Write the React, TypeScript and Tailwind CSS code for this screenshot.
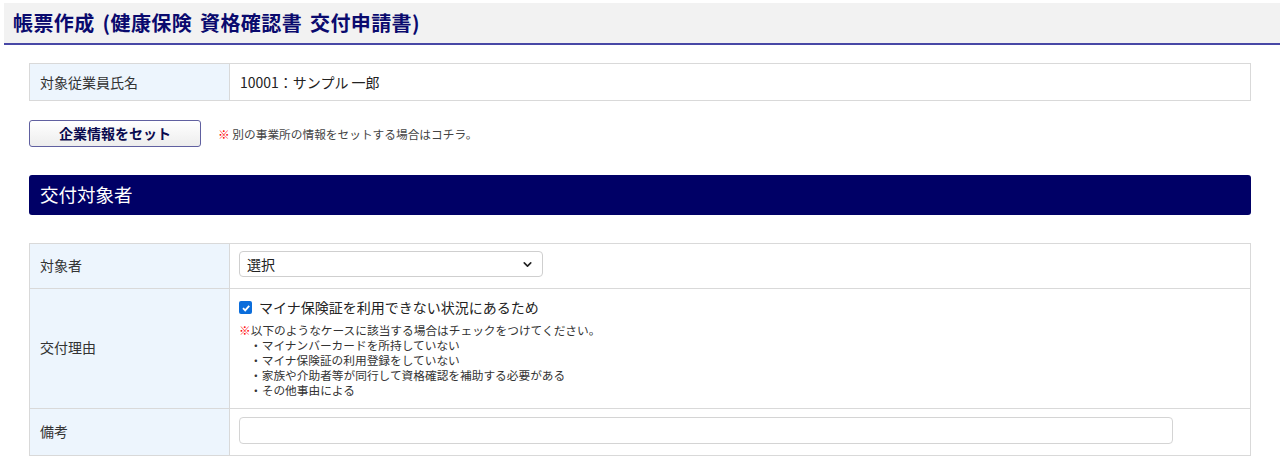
import { ChevronDown } from 'lucide-react';

const font = { fontFamily: '"Noto Sans CJK JP", "Noto Sans", sans-serif' };

const reasons = [
  'マイナンバーカードを所持していない',
  'マイナ保険証の利用登録をしていない',
  '家族や介助者等が同行して資格確認を補助する必要がある',
  'その他事由による',
];

export default function App() {
  return (
    <div className="min-h-[472px] bg-white pt-[3px] pl-[4px] text-[#333]" style={font}>
      <div className="h-[42px] bg-[#f2f2f2] border-b-2 border-[#4848a6] flex items-center pl-[9px]">
        <h1 className="text-[20px] font-bold text-[#0a0a6e] tracking-[0.4px] [word-spacing:3px]">
          帳票作成 (健康保険 資格確認書 交付申請書)
        </h1>
      </div>

      <div className="pl-[25px] pr-[29px]">
        <div className="mt-[18px] flex border border-[#d9d9d9] h-[38px]">
          <div className="w-[200px] bg-[#edf5fd] border-r border-[#d9d9d9] flex items-center pl-[10px] text-[14px]">
            対象従業員氏名
          </div>
          <div className="flex-1 flex items-center pl-[10px] text-[14px] text-[#222]">10001：サンプル 一郎</div>
        </div>

        <div className="mt-[19px] flex items-center">
          <button className="w-[172px] h-[27px] rounded-[3px] border border-[#6060a0] bg-gradient-to-b from-white to-[#ededed] text-[14px] font-bold text-[#0a0a4e]">
            企業情報をセット
          </button>
          <span className="ml-[17px] text-[11.7px] text-[#444]">
            <span className="text-[#ff0000] font-bold">※</span> 別の事業所の情報をセットする場合はコチラ。
          </span>
        </div>

        <div className="mt-[28px] h-[40px] rounded-[3px] bg-[#000066] flex items-center pl-[11px] text-white text-[18.5px]">
          交付対象者
        </div>

        <div className="mt-[28px] border border-[#d9d9d9] text-[14px]">
          <div className="flex h-[45px] border-b border-[#d9d9d9]">
            <div className="w-[200px] bg-[#edf5fd] border-r border-[#d9d9d9] flex items-center pl-[10px] pb-[2px]">対象者</div>
            <div className="flex-1 pl-[9px] pt-[7px]">
              <div className="w-[304px] h-[26px] rounded-[4px] border border-[#cfcfcf] flex items-center justify-between pl-[7px] pr-[8px] text-[14px] text-[#222]">
                <span>選択</span>
                <ChevronDown size={13} strokeWidth={3} className="text-[#222]" />
              </div>
            </div>
          </div>

          <div className="flex h-[120px] border-b border-[#d9d9d9]">
            <div className="w-[200px] bg-[#edf5fd] border-r border-[#d9d9d9] flex items-center pl-[10px] pb-[2px]">交付理由</div>
            <div className="flex-1 pl-[9px] pt-[8px]">
              <label className="flex items-center gap-[7px] text-[14px] text-[#222]">
                <span className="w-[13px] h-[13px] rounded-[2px] bg-[#0b6ddb] flex items-center justify-center">
                  <svg width="10" height="10" viewBox="0 0 10 10">
                    <path d="M2 5.2 L4.2 7.4 L8.2 2.8" fill="none" stroke="white" strokeWidth="1.8" />
                  </svg>
                </span>
                マイナ保険証を利用できない状況にあるため
              </label>
              <div className="mt-[4px] text-[11.7px] leading-[15px] text-[#333]">
                <div>
                  <span className="text-[#ff0000] font-bold">※</span>以下のようなケースに該当する場合はチェックをつけてください。
                </div>
                {reasons.map((r) => (
                  <div key={r} className="pl-[11px]">・{r}</div>
                ))}
              </div>
            </div>
          </div>

          <div className="flex h-[46px]">
            <div className="w-[200px] bg-[#edf5fd] border-r border-[#d9d9d9] flex items-center pl-[10px] pb-[2px]">備考</div>
            <div className="flex-1 pl-[9px] pt-[8px]">
              <div className="w-[934px] h-[27px] rounded-[4px] border border-[#d4d4d4]" />
            </div>
          </div>
        </div>
      </div>
    </div>
  );
}
